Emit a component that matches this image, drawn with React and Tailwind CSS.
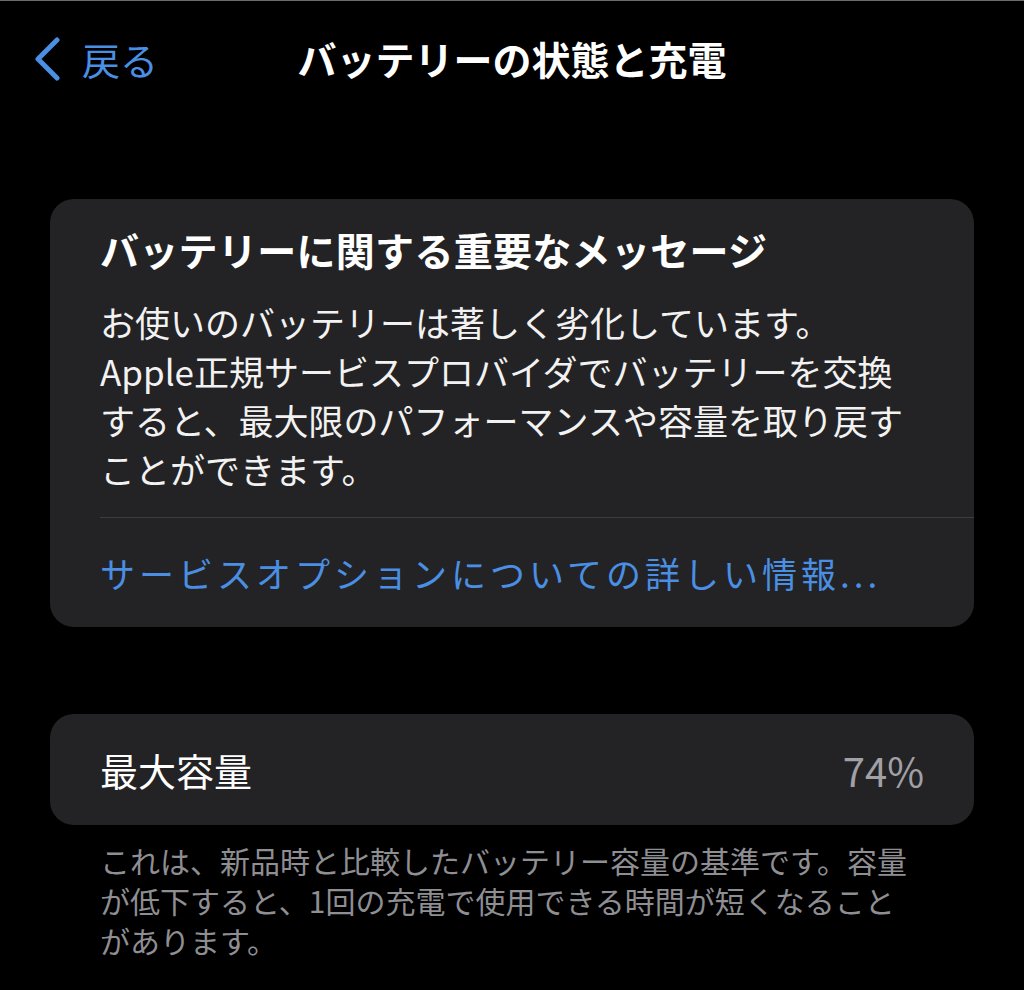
export default function App() {
  const font = { fontFamily: '"Noto Sans CJK JP", "Noto Sans", sans-serif' };
  return (
    <main className="min-h-[990px] w-full bg-black text-white border-t border-[#6b6b6b]" style={font}>
      {/* navigation bar */}
      <header className="grid h-[115px] grid-cols-[1fr_auto_1fr] items-center">
        <div className="flex items-center pl-[34px] text-[#4a8fe3]">
          <svg width="28" height="44" viewBox="0 0 28 44" fill="none">
            <path d="M23 3 L4 22 L23 41" stroke="currentColor" strokeWidth="5" strokeLinecap="round" strokeLinejoin="round" />
          </svg>
          <span className="ml-[20px] text-[38px] leading-none">戻る</span>
        </div>
        <h1 className="text-[39px] font-bold leading-none">バッテリーの状態と充電</h1>
        <div />
      </header>

      {/* battery message card */}
      <section className="mx-[50px] mt-[83px] rounded-[24px] bg-[#232325] pl-[50px]">
        <div className="pr-[40px] pt-[26px]">
          <h2 className="text-[39px] font-bold leading-[48px] tracking-[0.3px]">バッテリーに関する重要なメッセージ</h2>
          <p className="mt-[24px] text-[35px] leading-[49px] text-[#f2f2f2]">
            お使いのバッテリーは著しく劣化しています。
            <br />
            Apple正規サービスプロバイダでバッテリーを交換
            <br />
            すると、最大限のパフォーマンスや容量を取り戻す
            <br />
            ことができます。
          </p>
        </div>
        <div className="mt-[24px] h-px bg-[#3c3c3f]" />
        <p className="pb-[30px] pt-[30px] text-[35px] leading-[49px] tracking-[4px] text-[#4a8fe3]">
          サービスオプションについての詳しい情報...
        </p>
      </section>

      {/* maximum capacity row */}
      <section className="mx-[50px] mt-[87px] flex h-[111px] items-center justify-between rounded-[24px] bg-[#232325] px-[50px]">
        <span className="text-[38px] leading-none">最大容量</span>
        <span className="text-[40px] font-normal leading-none text-[#a0a0a5]">74%</span>
      </section>

      <p className="mt-[15px] pl-[100px] pr-[90px] text-[30px] leading-[40px] text-[#8e8e93]">
        これは、新品時と比較したバッテリー容量の基準です。容量
        <br />
        が低下すると、1回の充電で使用できる時間が短くなること
        <br />
        があります。
      </p>
    </main>
  );
}
